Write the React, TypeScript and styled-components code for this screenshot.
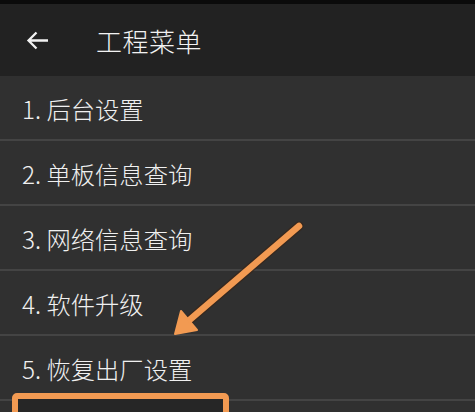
import React from "react";
import styled, { createGlobalStyle } from "styled-components";

const GlobalStyle = createGlobalStyle`
  html, body {
    margin: 0;
    padding: 0;
    background: #303030;
  }

  body {
    font-family: "Noto Sans CJK SC", "Noto Sans", sans-serif;
    overflow: hidden;
  }
`;

// the sixth entry is hidden below the highlight box in the screenshot
const items = ["1. 后台设置", "2. 单板信息查询", "3. 网络信息查询", "4. 软件升级", "5. 恢复出厂设置", ""];

const App: React.FC = () => {
  return (
    <Screen>
      <GlobalStyle />
      <StatusStrip />
      <Header>
        <BackButton>
          <svg width="23" height="19" viewBox="0 0 23 19" fill="none">
            <path d="M22 9.5H3M10.5 1.5L2.5 9.5L10.5 17.5" stroke="#f2f2f2" strokeWidth="2.3" />
          </svg>
        </BackButton>
        <Title>工程菜单</Title>
      </Header>
      <List>
        {items.map((label, i) => (
          <Row key={i}>{label}</Row>
        ))}
      </List>

      <Pointer width="475" height="412" viewBox="0 0 475 412">
        <line x1="299" y1="226" x2="186" y2="323" stroke="#3a2414" strokeWidth="9" strokeLinecap="round" opacity="0.6" />
        <line x1="299" y1="226" x2="186" y2="323" stroke="#f29a52" strokeWidth="6.5" strokeLinecap="round" />
        <polygon points="175,334 181,311 197,330" fill="#f29a52" stroke="#f29a52" strokeWidth="2" strokeLinejoin="round" />
      </Pointer>
      <Highlight />
    </Screen>
  );
};

export default App;

const Screen = styled.div`
  position: relative;
  width: 475px;
  height: 412px;
  overflow: hidden;
  background: #303030;
`;

const StatusStrip = styled.div`
  height: 4px;
  background: #0b0b0b;
`;

const Header = styled.div`
  display: flex;
  align-items: center;
  height: 72px;
  padding: 0 0 4px 26px;
  background: #222222;
  box-sizing: border-box;
`;

const BackButton = styled.div`
  display: flex;
  align-items: center;
  margin-right: 47px;
  margin-top: 4px;
`;

const Title = styled.div`
  color: #f2f2f2;
  font-size: 26px;
  font-weight: 300;
  letter-spacing: 0.5px;
  margin-top: 4px;
`;

const List = styled.div`
  display: flex;
  flex-direction: column;
`;

const Row = styled.div`
  display: flex;
  align-items: center;
  height: 61px;
  padding: 2px 0 0 22px;
  border-bottom: 2px solid #444444;
  color: #f0f0f0;
  font-size: 24.3px;
  font-weight: 300;
`;

const Pointer = styled.svg`
  position: absolute;
  left: 0;
  top: 0;
  pointer-events: none;
`;

const Highlight = styled.div`
  position: absolute;
  left: 12px;
  top: 393px;
  width: 217px;
  height: 60px;
  box-sizing: border-box;
  border: 6px solid #f29a52;
  border-radius: 5px;
  background: #262626;
`;
